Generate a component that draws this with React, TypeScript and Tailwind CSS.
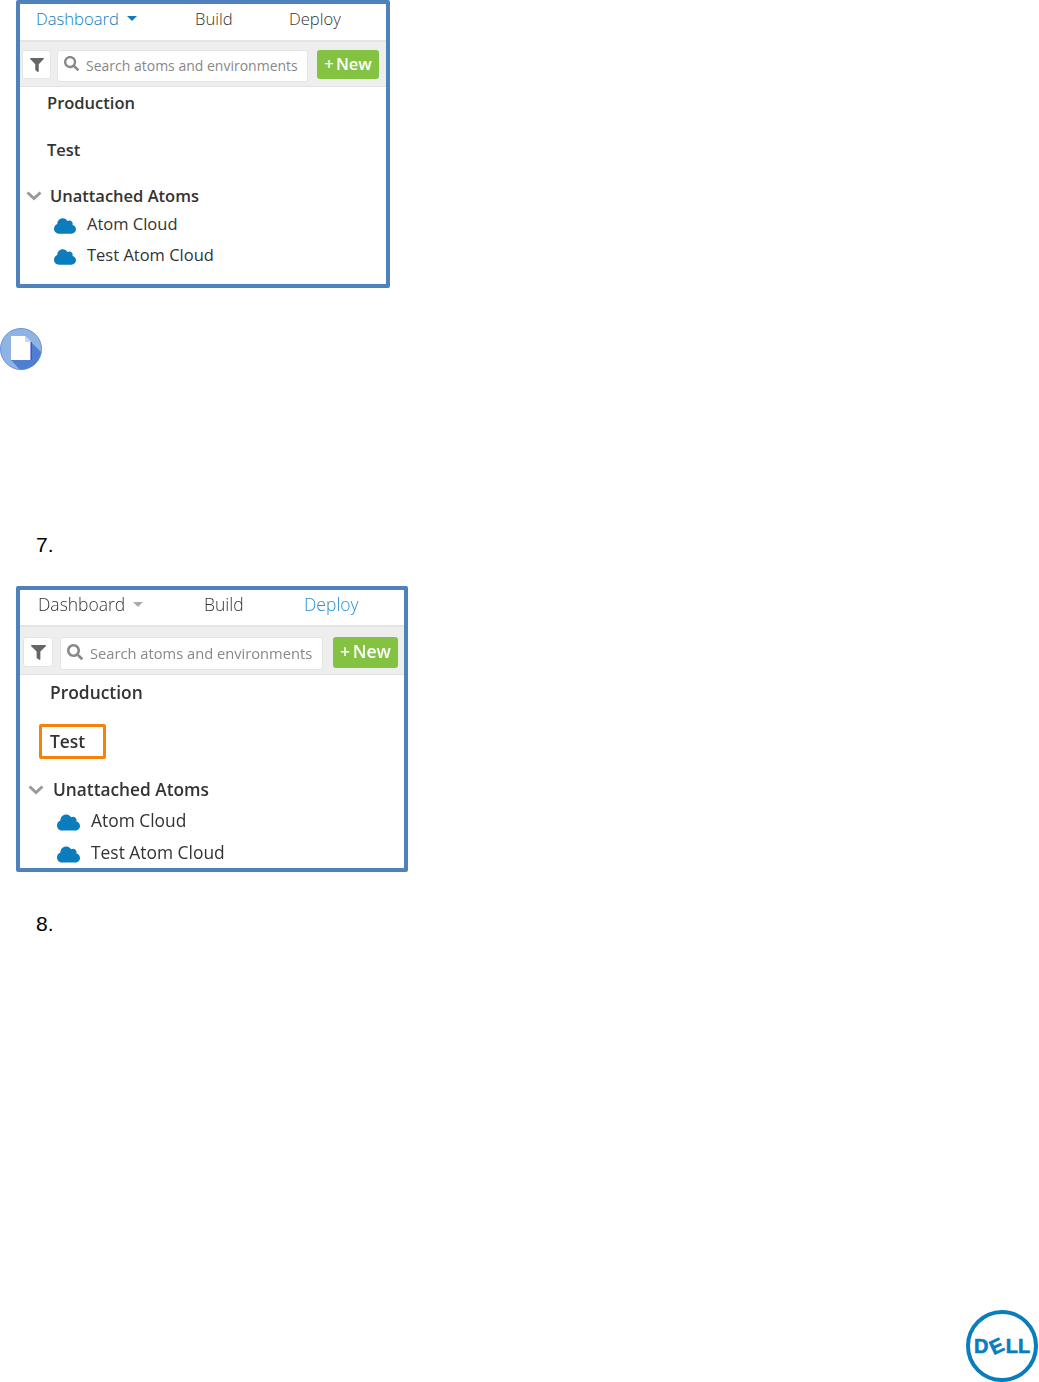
import React from 'react';
import { FaCloud, FaFilter, FaSearch } from 'react-icons/fa';

// ==========================================
// Panel sizes (the two screenshots differ a little in scale)
// ==========================================

const small = {
  frame: 'ml-4 w-[374px] h-[288px]',
  inner: '',
  nav: 'h-[38px] pb-[6px] text-[16.6px]',
  dashboard: 'ml-4 w-[159px] gap-2',
  build: 'w-[94px]',
  toolbar: 'h-[45px] pl-[2px] pt-[8px]',
  filter: 'w-[29px] h-[29px]',
  filterIcon: 14,
  search: 'ml-[6px] w-[251px] h-[32px] pl-[6px] pb-[2px] gap-[7px] text-[14px]',
  searchIcon: 15,
  newBtn: 'ml-[9px] w-[62px] h-[29px] pb-[1px] text-[16.5px]',
  production: 'h-[32px] pl-[27px] text-[16.5px]',
  test: 'h-[62px] pl-[27px] pt-[1px] text-[16.5px]',
  unattached: 'h-[30px] pl-[6px] gap-[8px] text-[16.5px]',
  atom: 'h-[26px] pl-[34px] gap-[11px] text-[16.5px]',
  atomLast: 'h-[36px] pl-[34px] gap-[11px] text-[16.5px]',
  cloud: 22,
};

const large = {
  frame: 'ml-4 w-[392px] h-[286px]',
  inner: 'blur-[0.35px]',
  nav: 'h-[37px] pb-[6px] text-[17.5px]',
  dashboard: 'ml-[18px] w-[166px] gap-2',
  build: 'w-[100px]',
  toolbar: 'h-[48px] pl-[3px] pt-[10px]',
  filter: 'w-[30px] h-[30px]',
  filterIcon: 15,
  search: 'ml-[7px] w-[263px] h-[33px] pl-[6px] pb-[1px] gap-[7px] text-[14.7px]',
  searchIcon: 16,
  newBtn: 'ml-[10px] w-[65px] h-[31px] pb-[2px] text-[17.6px]',
  production: 'h-[34px] pl-[30px] text-[17.4px]',
  test: 'h-[64px] pl-[30px] text-[17.4px]',
  unattached: 'h-[34px] pl-[8px] gap-[9px] text-[17.3px]',
  atom: 'h-[26px] pl-[37px] gap-[11px] text-[17.4px]',
  atomLast: 'h-[38px] pl-[37px] gap-[11px] text-[17.4px]',
  cloud: 23,
};

// ==========================================
// Components
// ==========================================

const Panel: React.FC<{ s: typeof small; active: 'dashboard' | 'deploy'; boxed?: boolean; className?: string }> = ({ s, active, boxed, className }) => (
  <div className={`${s.frame} ${className || ''} border-4 border-[#4f81bd] rounded-[2px] overflow-hidden text-[#333] font-['Open_Sans',sans-serif] bg-white`}>
    <div className={s.inner}>
      <div className={`${s.nav} flex items-center font-light border-b-2 border-[#e4e4e4]`}>
        <div className={`${s.dashboard} flex items-center ${active === 'dashboard' ? 'text-[#0f7dbd]' : 'text-[#333]'}`}>
          Dashboard
          <span className={`w-0 h-0 border-x-[5px] border-x-transparent border-t-[5px] ${active === 'dashboard' ? 'border-t-[#0f7dbd]' : 'border-t-[#aaa]'}`} />
        </div>
        <div className={`${s.build} text-[#333]`}>Build</div>
        <div className={active === 'deploy' ? 'text-[#2b8fcf]' : 'text-[#333]'}>Deploy</div>
      </div>

      <div className={`${s.toolbar} flex items-start bg-[#eeeeee] border-b border-[#e2e2e2]`}>
        <div className={`${s.filter} flex items-center justify-center bg-white rounded-[3px] border border-[#e4e4e4] text-[#666]`}>
          <FaFilter size={s.filterIcon} />
        </div>
        <div className={`${s.search} flex items-center bg-white rounded-[3px] border border-[#e4e4e4] text-[#888] whitespace-nowrap`}>
          <FaSearch size={s.searchIcon} className="text-[#888] mb-[3px]" />
          Search atoms and environments
        </div>
        <div className={`${s.newBtn} flex items-center justify-center bg-[#84c341] rounded-[3px] text-white font-semibold [word-spacing:-2px]`}>
          + New
        </div>
      </div>

      <div className={`${s.production} flex items-center font-semibold`}>Production</div>
      <div className={`${s.test} flex items-center font-semibold`}>
        {boxed ? (
          <span className="ml-[-11px] w-[67px] h-[35px] flex items-center pl-[8px] border-[3px] border-[#f5820b] rounded-[2px]">Test</span>
        ) : 'Test'}
      </div>
      <div className={`${s.unattached} flex items-center font-semibold`}>
        <svg width="16" height="10" viewBox="0 0 16 10" className="text-[#999]">
          <path d="M1.5 1.5 L8 7.5 L14.5 1.5" fill="none" stroke="currentColor" strokeWidth="3" />
        </svg>
        Unattached Atoms
      </div>
      <div className={`${s.atom} flex items-center`}>
        <FaCloud size={s.cloud} className="text-[#0b7cbc] mt-1" />
        Atom Cloud
      </div>
      <div className={`${s.atomLast} flex items-center`}>
        <FaCloud size={s.cloud} className="text-[#0b7cbc] mt-1" />
        Test Atom Cloud
      </div>
    </div>
  </div>
);

const NoteIcon = () => (
  <svg width="42" height="42" viewBox="0 0 42 42" className="block">
    <defs>
      <clipPath id="note-circle"><circle cx="21" cy="21" r="20.5" /></clipPath>
    </defs>
    <circle cx="21" cy="21" r="20.5" fill="#8fb4e3" stroke="#6f8fe8" strokeWidth="1" />
    <g clipPath="url(#note-circle)">
      <path d="M11 32 L31 14 L44 27 V44 H22 Z" fill="#4f7fcf" />
    </g>
    <path d="M11 8 H25 L31 14 V32 H11 Z" fill="#ffffff" />
    <path d="M25 8 V14 H31 Z" fill="#c9d6ee" />
    <path d="M31 14 V32" stroke="#2a2ae8" strokeWidth="1" />
  </svg>
);

const DellLogo = () => (
  <div className="w-[72px] h-[72px] rounded-full border-[4px] border-[#0a7dbd] flex items-center justify-center text-[#0a7dbd] font-['Liberation_Sans',sans-serif] font-bold text-[20px] leading-[14px] [-webkit-text-stroke:0.6px_#0a7dbd]">
    <span>D</span>
    <span className="inline-block mx-[2px] -rotate-[25deg]">E</span>
    <span>LL</span>
  </div>
);

const StepNumber: React.FC<{ n: string; className: string }> = ({ n, className }) => (
  <div className={`${className} pl-9 text-[21px] leading-[24px] text-black font-['Liberation_Sans',sans-serif]`}>{n}</div>
);

// ==========================================
// Page
// ==========================================

export default function App() {
  return (
    <div className="w-[1039px] h-[1382px] overflow-hidden bg-white">
      <Panel s={small} active="dashboard" />
      <div className="mt-10"><NoteIcon /></div>
      <StepNumber n="7." className="mt-[163px]" />
      <Panel s={large} active="deploy" boxed className="mt-[29px]" />
      <StepNumber n="8." className="mt-[40px]" />
      <div className="mt-[374px] pr-px flex justify-end"><DellLogo /></div>
    </div>
  );
}
